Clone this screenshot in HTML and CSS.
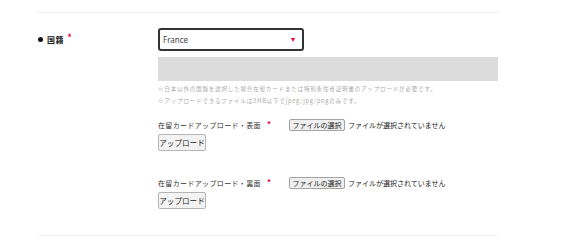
FILE: index.html
```html
<!DOCTYPE html>
<html lang="ja">
<head>
<meta charset="utf-8">
<title>国籍</title>
<link rel="stylesheet" href="styles.css">
</head>
<body>
<div class="page">
  <div class="divider"></div>
  <div class="row">
    <div class="row-label">
      <span class="bullet"></span>
      <span class="label-text">国籍</span>
      <span class="req">*</span>
    </div>
    <div class="row-body">
      <div class="select">
        <span class="select-value">France</span>
        <span class="select-arrow"></span>
      </div>
      <div class="gray-box"></div>
      <div class="notes">
        <p class="note">※日本以外の国籍を選択した場合在留カードまたは特別永住者証明書のアップロードが必要です。</p>
        <p class="note">※アップロードできるファイルは3MB以下でjpeg/jpg/pngのみです。</p>
      </div>
      <div class="upload">
        <div class="upload-row">
          <span class="upload-label">在留カードアップロード・表面<span class="req small">*</span></span>
          <span class="file">
            <span class="btn file-btn">ファイルの選択</span>
            <span class="file-status">ファイルが選択されていません</span>
          </span>
        </div>
        <span class="btn upload-btn">アップロード</span>
      </div>
      <div class="upload second">
        <div class="upload-row">
          <span class="upload-label">在留カードアップロード・裏面<span class="req small">*</span></span>
          <span class="file">
            <span class="btn file-btn">ファイルの選択</span>
            <span class="file-status">ファイルが選択されていません</span>
          </span>
        </div>
        <span class="btn upload-btn">アップロード</span>
      </div>
    </div>
  </div>
  <div class="divider bottom"></div>
</div>
</body>
</html>
```
FILE: styles.css
```css
html, body {
  margin: 0;
  padding: 0;
  background: #ffffff;
}
body {
  font-family: "Noto Sans CJK JP", "Noto Sans", sans-serif;
  color: #333333;
}
.page {
  width: 460px;
  margin-left: 38px;
  padding-top: 12px;
}
.divider {
  height: 1px;
  background: #eeeeee;
}
.divider.bottom {
  margin-top: 26px;
  background: #f3f3f3;
}
.row {
  display: flex;
  margin-top: 15px;
}
.row-label {
  width: 120px;
  height: 23px;
  display: flex;
  align-items: center;
  flex-shrink: 0;
}
.bullet {
  width: 5px;
  height: 5px;
  border-radius: 50%;
  background: #111111;
  margin-right: 4px;
}
.label-text {
  font-size: 8px;
  font-weight: 700;
  letter-spacing: 0.6px;
  color: #222222;
  line-height: 1;
}
.req {
  color: #e60033;
  font-size: 9px;
  font-weight: 700;
  margin-left: 3px;
  position: relative;
  top: -2px;
  line-height: 1;
}
.req.small {
  font-size: 8px;
  margin-left: 6px;
  top: -1px;
}
.row-body {
  flex: 1;
  display: flex;
  flex-direction: column;
}
.select {
  width: 146px;
  height: 23px;
  box-sizing: border-box;
  border: 2px solid #333333;
  border-radius: 3px;
  display: flex;
  align-items: center;
  justify-content: space-between;
  padding: 0 7px 0 3px;
}
.select-value {
  font-family: "Noto Sans", sans-serif;
  font-size: 8px;
  color: #444444;
}
.select-arrow {
  width: 0;
  height: 0;
  border-left: 2.5px solid transparent;
  border-right: 2.5px solid transparent;
  border-top: 4px solid #e60033;
}
.gray-box {
  margin-top: 6px;
  height: 24px;
  background: #dcdcdc;
}
.notes {
  margin-top: 2px;
}
.note {
  margin: 0;
  font-size: 5.6px;
  line-height: 12px;
  letter-spacing: 0.75px;
  color: #aaaaaa;
  white-space: nowrap;
}
.upload {
  margin-top: 11px;
  display: flex;
  flex-direction: column;
  align-items: flex-start;
}
.upload.second {
  margin-top: 25px;
}
.upload-row {
  display: flex;
  align-items: center;
  height: 14px;
}
.upload-label {
  width: 131px;
  font-size: 7px;
  letter-spacing: 0.35px;
  color: #333333;
  white-space: nowrap;
}
.file {
  display: flex;
  align-items: center;
}
.btn {
  font-size: 7px;
  color: #222222;
  background: #efefef;
  border: 1px solid #a3a3a3;
  border-radius: 2px;
  box-sizing: border-box;
  display: inline-flex;
  align-items: center;
  justify-content: center;
  white-space: nowrap;
}
.file-btn {
  width: 56px;
  height: 12px;
}
.file-status {
  font-size: 7px;
  color: #222222;
  margin-left: 3px;
  white-space: nowrap;
}
.upload-btn {
  margin-top: 2px;
  width: 48px;
  height: 17px;
  font-size: 7.6px;
  background: #f3f3f3;
  border-color: #b5b5b5;
}
```
